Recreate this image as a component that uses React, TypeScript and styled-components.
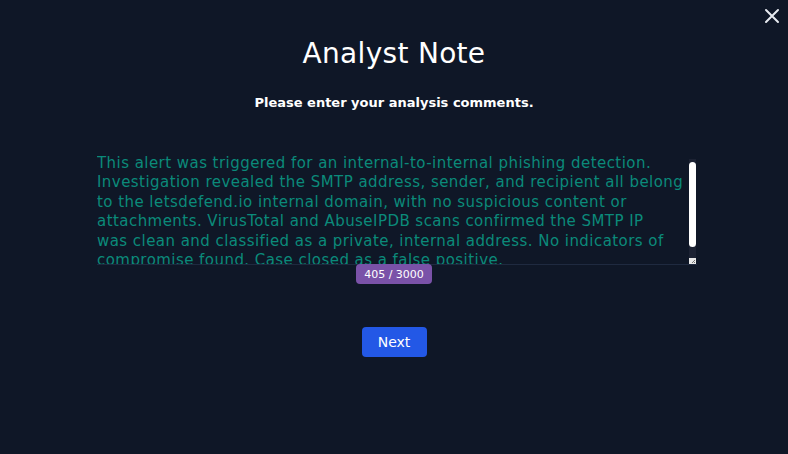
import { useState } from "react";
import styled, { createGlobalStyle } from "styled-components";

const NOTE = [
  "This alert was triggered for an internal-to-internal phishing detection.",
  "Investigation revealed the SMTP address, sender, and recipient all belong",
  "to the letsdefend.io internal domain, with no suspicious content or",
  "attachments. VirusTotal and AbuseIPDB scans confirmed the SMTP IP",
  "was clean and classified as a private, internal address. No indicators of",
  "compromise found. Case closed as a false positive.",
].join("\n");

const GlobalStyle = createGlobalStyle`
  html, body {
    margin: 0;
    padding: 0;
    background: #0f1727;
  }

  body {
    font-family: "DejaVu Sans", "Noto Sans", sans-serif;
    color: #fff;
  }
`;

const App = () => {
  const [note, setNote] = useState(NOTE);

  return (
    <>
      <GlobalStyle />
      <Page>
        <CloseButton aria-label="Close">
          <svg width="16" height="16" viewBox="0 0 16 16">
            <path d="M2 2 L14 14 M14 2 L2 14" stroke="#e6e9ef" strokeWidth="2" strokeLinecap="round" />
          </svg>
        </CloseButton>
        <Panel>
          <Title>Analyst Note</Title>
          <Subtitle>Please enter your analysis comments.</Subtitle>
          <NoteField>
            <NoteArea value={note} onChange={(e) => setNote(e.target.value)} maxLength={3000} />
            <ScrollTrack aria-hidden>
              <ScrollThumb />
            </ScrollTrack>
            <Resizer aria-hidden>
              <svg width="5" height="5" viewBox="0 0 5 5">
                <path d="M1 4 L4 1 M3 4 L4 3" stroke="#555" strokeWidth="0.8" />
              </svg>
            </Resizer>
          </NoteField>
          <Counter>{note.length} / 3000</Counter>
          <NextButton>Next</NextButton>
        </Panel>
      </Page>
    </>
  );
};

const Page = styled.div`
  position: relative;
  min-height: 454px;
`;

const CloseButton = styled.button`
  position: absolute;
  top: 7px;
  right: 7px;
  width: 18px;
  height: 18px;
  padding: 0;
  display: flex;
  align-items: center;
  justify-content: center;
  background: none;
  border: none;
  cursor: pointer;
`;

const Panel = styled.div`
  display: flex;
  flex-direction: column;
  align-items: center;
  padding-top: 38px;
`;

const Title = styled.h1`
  margin: 0;
  font-size: 28px;
  font-weight: 500;
  letter-spacing: 0.3px;
  line-height: 32px;
  color: #fff;
`;

const Subtitle = styled.p`
  margin: 24px 0 0;
  font-size: 13px;
  font-weight: bold;
  line-height: 18px;
  color: #fff;
`;

const NoteField = styled.div`
  position: relative;
  width: 600px;
  height: 111px;
  margin: 42px 0 0 6px;
`;

const NoteArea = styled.textarea`
  box-sizing: border-box;
  display: block;
  width: 100%;
  height: 100%;
  margin: 0;
  padding: 0 9px 0 0;
  background: transparent;
  border: none;
  border-bottom: 1px solid #1f2a40;
  outline: none;
  color: #0b8a7a;
  font-family: "DejaVu Sans", "Noto Sans", sans-serif;
  font-size: 15px;
  letter-spacing: 0.45px;
  line-height: 19.4px;
  white-space: pre-wrap;
  overflow-y: auto;
  resize: none;
  scrollbar-width: none;

  &::-webkit-scrollbar {
    display: none;
  }
`;

const ScrollTrack = styled.div`
  position: absolute;
  top: 5px;
  right: 1px;
  width: 7px;
  height: 99px;
  padding-top: 3px;
  box-sizing: border-box;
  background: #1c2233;
  pointer-events: none;
`;

const ScrollThumb = styled.div`
  width: 7px;
  height: 85px;
  background: #fff;
  border-radius: 4px;
`;

const Resizer = styled.div`
  position: absolute;
  top: 104px;
  right: 1px;
  width: 7px;
  height: 6px;
  display: flex;
  align-items: flex-end;
  justify-content: flex-end;
  background: #e8e8e8;
  pointer-events: none;
`;

const Counter = styled.span`
  margin-top: -1px;
  padding: 0 8px;
  height: 20px;
  display: flex;
  align-items: center;
  background: #7a52a8;
  border-radius: 4px;
  color: #fff;
  font-size: 11px;
  position: relative;
`;

const NextButton = styled.button`
  margin-top: 43px;
  width: 65px;
  height: 30px;
  background: #2358e6;
  border: none;
  border-radius: 4px;
  color: #fff;
  font-family: "DejaVu Sans", "Noto Sans", sans-serif;
  font-size: 14px;
  font-weight: 500;
  cursor: pointer;
`;

export default App;
